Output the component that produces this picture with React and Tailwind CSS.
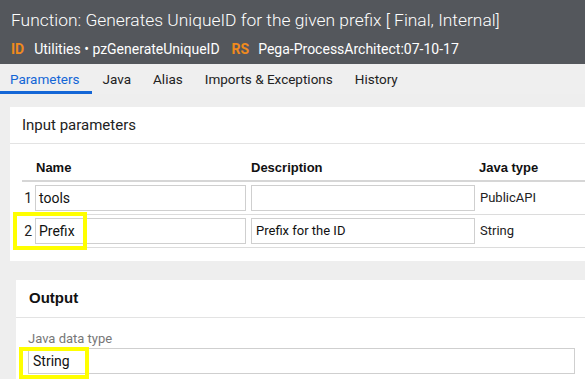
import React from 'react'

const font = { fontFamily: 'Roboto, "Open Sans", sans-serif' }

// Tab strip item
function Tab({ label, active }) {
  return (
    <div
      className={
        'h-[30px] flex items-center text-[13.5px] ' +
        (active ? 'text-[#1466d6] border-b-[3px] border-[#1466d6] pt-[3px] pl-[10px] pr-[12px]' : 'text-[#222] px-[11px]')
      }
    >
      {label}
    </div>
  )
}

// Table row with inputs
function ParamRow({ index, name, description, type }) {
  return (
    <div className="grid grid-cols-[11px_215px_229px_1fr] h-[33px] items-center border-b border-[#dcdcdc]">
      <div className="text-[14px] text-[#222] text-right pr-[1px]">{index}</div>
      <div className="pl-[2px] pr-[2px]">
        <div className="h-[26px] border border-[#cfcfcf] flex items-center px-[3px] text-[14px] text-[#111]">{name}</div>
      </div>
      <div className="pl-[3px] pr-[2px]">
        <div className="h-[26px] border border-[#cfcfcf] flex items-center px-[4px] text-[13px] text-[#111]">{description}</div>
      </div>
      <div className="pl-[3px] text-[13px] text-[#222]">{type}</div>
    </div>
  )
}

export default function App() {
  return (
    <div className="w-[585px] h-[379px] overflow-hidden bg-[#eeeeee]" style={font}>
      {/* Header */}
      <div className="h-[64px] bg-[#54575c] text-white px-[11px] pt-[6px]">
        <div className="text-[17.4px] font-light leading-[28px] whitespace-nowrap">
          Function: Generates UniqueID for the given prefix [ Final, Internal]
        </div>
        <div className="flex items-center text-[14px] leading-[22px] mt-[4px] whitespace-nowrap">
          <span className="text-[#f08a1c] font-bold mr-[10px]">ID</span>
          <span className="mr-[12px]">Utilities • pzGenerateUniqueID</span>
          <span className="text-[#f08a1c] font-bold mr-[9px]">RS</span>
          <span>Pega-ProcessArchitect:07-10-17</span>
        </div>
      </div>

      {/* Tabs */}
      <div className="flex items-end h-[30px] bg-[#efefef]">
        <Tab label="Parameters" active />
        <Tab label="Java" />
        <Tab label="Alias" />
        <Tab label="Imports & Exceptions" />
        <Tab label="History" />
      </div>

      {/* Input parameters card */}
      <div className="mt-[13px] ml-[10px] w-[620px] h-[154px] bg-white">
        <div className="h-[37px] flex items-center px-[12px] text-[15px] text-[#222] border-b border-[#e3e3e3]">
          Input parameters
        </div>
        <div className="pl-[12px] pt-[11px]">
          <div className="grid grid-cols-[11px_215px_229px_1fr] h-[27px] items-center border-b-2 border-[#d6d6d6] font-bold text-[13px] text-[#111]" style={{ fontFamily: '"Liberation Sans", sans-serif' }}>
            <div />
            <div className="pl-[3px]">Name</div>
            <div className="pl-[3px]">Description</div>
            <div className="pl-[2px]">Java type</div>
          </div>
          <ParamRow index="1" name="tools" description="" type="PublicAPI" />
          <div className="relative">
            <ParamRow index="2" name="Prefix" description="Prefix for the ID" type="String" />
            <div className="absolute left-[-9px] top-[-3px] w-[74px] h-[38px] border-[4px] border-[#ffff00]" />
          </div>
        </div>
      </div>

      {/* Output card */}
      <div className="mt-[19px] ml-[16px] w-[620px] h-[120px] bg-white">
        <div className="h-[37px] flex items-center px-[13px] text-[15px] font-bold text-[#111]" style={{ fontFamily: '"Liberation Sans", sans-serif' }}>
          Output
        </div>
        <div className="border-b border-[#e3e3e3]" />
        <div className="px-[12px] pt-[12px]">
          <div className="text-[13px] text-[#777] leading-[18px]">Java data type</div>
          <div className="relative w-[547px] h-[26px] border border-[#cfcfcf] flex items-center px-[4px] text-[14px] text-[#111]">
            String
            <div className="absolute left-[-10px] top-[-2px] w-[70px] h-[32px] border-[4px] border-[#ffff00]" />
          </div>
        </div>
      </div>
    </div>
  )
}
